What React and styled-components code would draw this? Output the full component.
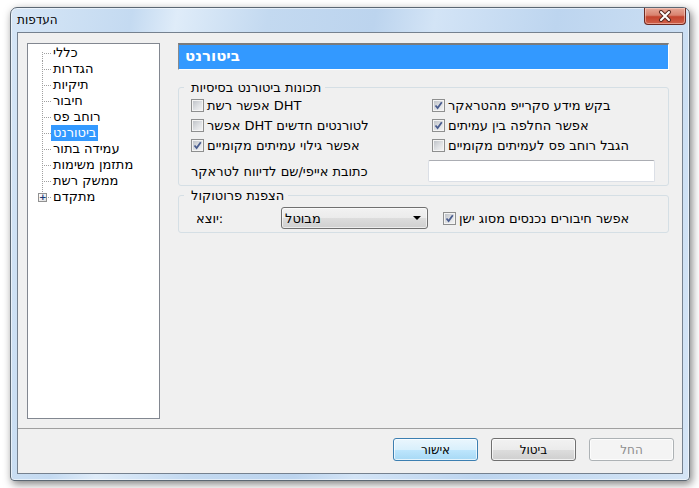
import React from 'react';
import styled, { createGlobalStyle } from 'styled-components';

const GlobalStyle = createGlobalStyle`
  html, body {
    margin: 0;
    padding: 0;
    background: #fff;
  }
  body {
    font-family: "DejaVu Sans", "Liberation Sans", sans-serif;
    font-size: 13px;
    color: #000;
  }
  #root {
    width: 699px;
    height: 488px;
    overflow: hidden;
  }
`;

const treeItems = [
  'כללי',
  'הגדרות',
  'תיקיות',
  'חיבור',
  'רוחב פס',
  'ביטורנט',
  'עמידה בתור',
  'מתזמן משימות',
  'ממשק רשת',
  'מתקדם',
];

const basicLeft = [
  { label: 'אפשר רשת DHT', checked: false },
  { label: 'אפשר DHT לטורנטים חדשים', checked: false },
  { label: 'אפשר גילוי עמיתים מקומיים', checked: true },
];

const basicRight = [
  { label: 'בקש מידע סקרייפ מהטראקר', checked: true },
  { label: 'אפשר החלפה בין עמיתים', checked: true },
  { label: 'הגבל רוחב פס לעמיתים מקומיים', checked: false },
];

const CheckMark = () => (
  <svg width="9" height="9" viewBox="0 0 9 9">
    <path d="M1.5 4.5 L3.6 7 L7.8 1.2" fill="none" stroke="#4a5d8f" strokeWidth="1.8" />
  </svg>
);

const CloseGlyph = () => (
  <svg width="14" height="12" viewBox="0 0 14 12">
    <path d="M3 2 L11 10 M11 2 L3 10" stroke="#5a2a22" strokeWidth="4" strokeLinecap="round" />
    <path d="M3 2 L11 10 M11 2 L3 10" stroke="#fff" strokeWidth="2" strokeLinecap="round" />
  </svg>
);

const CheckBox = ({ checked, label }) => (
  <CheckRow>
    <Box>{checked && <CheckMark />}</Box>
    <span>{label}</span>
  </CheckRow>
);

const App = () => {
  return (
    <>
      <GlobalStyle />
      <Window>
        <TitleBar>
          <Title>העדפות</Title>
          <CloseButton><CloseGlyph /></CloseButton>
        </TitleBar>
        <Client>
          <Main>
            <Tree>
              {treeItems.map((item, idx) => (
                <TreeRow key={item}>
                  <Connector $first={idx === 0} $last={idx === treeItems.length - 1}>
                    {idx === treeItems.length - 1 && <PlusBox>+</PlusBox>}
                  </Connector>
                  <TreeLabel $selected={item === 'ביטורנט'}>{item}</TreeLabel>
                </TreeRow>
              ))}
            </Tree>

            <Panel>
              <Banner>ביטורנט</Banner>

              <Group $top={11} $pad="1px 12px 3px">
                <Legend>תכונות ביטורנט בסיסיות</Legend>
                <BasicGrid>
                  <Column>
                    {basicLeft.map((c) => (
                      <CheckBox key={c.label} {...c} />
                    ))}
                  </Column>
                  <Column>
                    {basicRight.map((c) => (
                      <CheckBox key={c.label} {...c} />
                    ))}
                  </Column>
                  <TrackerLabel>כתובת אייפי/שם לדיווח לטראקר</TrackerLabel>
                  <TextInput />
                </BasicGrid>
              </Group>

              <Group $top={3} $pad="5px 12px 3px">
                <Legend>הצפנת פרוטוקול</Legend>
                <EncRow>
                  <EncLabel>יוצא:</EncLabel>
                  <Select>
                    <span>מבוטל</span>
                    <Arrow />
                  </Select>
                  <EncCheck>
                    <CheckBox checked label="אפשר חיבורים נכנסים מסוג ישן" />
                  </EncCheck>
                </EncRow>
              </Group>
            </Panel>
          </Main>

          <Separator />

          <Footer>
            <Button $variant="default">אישור</Button>
            <Button>ביטול</Button>
            <Button $variant="disabled">החל</Button>
          </Footer>
        </Client>
      </Window>
    </>
  );
};

export default App;

const Window = styled.div`
  margin: 7px 0 0 10px;
  width: 680px;
  height: 474px;
  box-sizing: border-box;
  border: 1px solid #5b6773;
  border-radius: 7px 7px 4px 4px;
  padding: 0 6px 6px;
  display: flex;
  flex-direction: column;
  background: linear-gradient(100deg, #d6e6f6 0%, #c4daf1 16%, #dfecf9 22%, #c3d9f0 34%, #bcd4ee 48%, #d3e4f6 56%, #bdd5ef 72%, #cadef3 88%, #d5e5f6 100%);
  box-shadow: 2px 3px 9px rgba(0, 0, 0, 0.5), inset 0 0 0 1px rgba(255, 255, 255, 0.55);
`;

const TitleBar = styled.div`
  height: 24px;
  display: flex;
  justify-content: space-between;
  align-items: flex-start;
`;

const Title = styled.div`
  font-size: 12px;
  line-height: 25px;
  color: #000;
`;

const CloseButton = styled.div`
  width: 42px;
  height: 17px;
  margin-right: -3px;
  box-sizing: border-box;
  border: 1px solid #6d2a22;
  border-top: none;
  border-radius: 0 0 4px 4px;
  background: linear-gradient(#e6a898 0%, #d9836f 45%, #c4442e 55%, #d0614a 100%);
  box-shadow: inset 0 0 0 1px rgba(255, 220, 210, 0.5);
  display: flex;
  align-items: center;
  justify-content: center;
`;

const Client = styled.div`
  flex: 1;
  background: #f0f0f0;
  border: 1px solid #75818f;
  display: flex;
  flex-direction: column;
`;

const Main = styled.div`
  display: flex;
  gap: 18px;
  padding: 10px 13px 0 9px;
`;

const Tree = styled.div`
  width: 133px;
  height: 376px;
  box-sizing: border-box;
  flex-shrink: 0;
  background: #fff;
  border: 1px solid #828790;
  padding-top: 1px;
`;

const TreeRow = styled.div`
  display: flex;
  align-items: center;
  height: 16px;
  white-space: nowrap;
`;

const Connector = styled.span`
  position: relative;
  width: 23px;
  height: 16px;
  flex-shrink: 0;
  &::before {
    content: '';
    position: absolute;
    left: 14px;
    width: 1px;
    top: ${(p) => (p.$first ? '7px' : '0')};
    bottom: ${(p) => (p.$last ? '8px' : '0')};
    background: repeating-linear-gradient(to bottom, #a0a0a0 0 1px, transparent 1px 2px);
  }
  &::after {
    content: '';
    position: absolute;
    left: 15px;
    top: 8px;
    width: 8px;
    height: 1px;
    background: repeating-linear-gradient(to right, transparent 0 1px, #a0a0a0 1px 2px);
  }
`;

const PlusBox = styled.span`
  position: absolute;
  left: 10px;
  top: 4px;
  width: 9px;
  height: 9px;
  box-sizing: border-box;
  z-index: 1;
  border: 1px solid #919191;
  background: linear-gradient(135deg, #fff, #e0e0e0);
  color: #1c3c78;
  font: bold 9px/7px "DejaVu Sans", sans-serif;
  text-align: center;
`;

const TreeLabel = styled.span`
  padding: 0 2px;
  line-height: 16px;
  background: ${(p) => (p.$selected ? '#3399ff' : 'transparent')};
  color: ${(p) => (p.$selected ? '#fff' : '#000')};
`;

const Panel = styled.div`
  flex: 1;
  min-width: 0;
`;

const Banner = styled.div`
  height: 27px;
  box-sizing: border-box;
  background: #3399ff;
  border-top: 2px solid #7b7b7b;
  border-left: 1px solid #8a8a8a;
  border-right: 1px solid #fff;
  border-bottom: 1px solid #fff;
  padding-left: 6px;
  color: #fff;
  font-weight: bold;
  font-size: 15px;
  line-height: 23px;
`;

const Group = styled.fieldset`
  margin: ${(p) => p.$top}px 0 0;
  padding: ${(p) => p.$pad};
  border: 1px solid #d5dfe5;
  border-radius: 3px;
  min-width: 0;
`;

const Legend = styled.legend`
  margin-left: -7px;
  padding: 0 4px 0 7px;
  line-height: 13px;
`;

const BasicGrid = styled.div`
  display: grid;
  grid-template-columns: 241px 1fr;
  align-items: center;
`;

const Column = styled.div`
  display: flex;
  flex-direction: column;
`;

const CheckRow = styled.label`
  display: flex;
  align-items: center;
  gap: 3px;
  height: 20px;
  white-space: nowrap;
`;

const Box = styled.span`
  width: 13px;
  height: 13px;
  box-sizing: border-box;
  flex-shrink: 0;
  border: 1px solid #8e8f8f;
  background: linear-gradient(135deg, #b9bdc3 0%, #dfe1e4 55%, #f6f6f6 100%);
  box-shadow: inset 0 0 0 1px #f4f4f4;
  display: flex;
  align-items: center;
  justify-content: center;
`;

const TrackerLabel = styled.div`
  margin-top: 5px;
`;

const TextInput = styled.div`
  margin: 5px 0 0 -4px;
  width: 227px;
  height: 22px;
  box-sizing: border-box;
  background: #fff;
  border: 1px solid #dbdfe6;
  border-top-color: #abadb3;
  border-radius: 2px;
`;

const EncRow = styled.div`
  display: flex;
  align-items: center;
  height: 22px;
`;

const EncLabel = styled.div`
  width: 90px;
  padding-left: 5px;
  box-sizing: border-box;
`;

const Select = styled.div`
  width: 147px;
  height: 22px;
  box-sizing: border-box;
  border: 1px solid #707070;
  border-radius: 3px;
  background: linear-gradient(#f2f2f2 0%, #ebebeb 50%, #dddddd 51%, #cfcfcf 100%);
  box-shadow: inset 0 0 0 1px rgba(255, 255, 255, 0.6);
  display: flex;
  align-items: center;
  justify-content: space-between;
  padding: 0 6px 0 3px;
`;

const Arrow = styled.span`
  width: 0;
  height: 0;
  border-left: 4px solid transparent;
  border-right: 4px solid transparent;
  border-top: 4px solid #000;
`;

const EncCheck = styled.div`
  margin-left: 15px;
`;

const Separator = styled.div`
  margin-top: 9px;
  border-top: 1px solid #a0a0a0;
`;

const Footer = styled.div`
  display: flex;
  justify-content: flex-end;
  gap: 13px;
  padding: 9px 8px 0;
`;

const Button = styled.button`
  width: 85px;
  height: 23px;
  padding: 0;
  border-radius: 3px;
  font: 12px "DejaVu Sans", "Liberation Sans", sans-serif;
  color: ${(p) => (p.$variant === 'disabled' ? '#8d8d8d' : '#000')};
  border: 1px solid
    ${(p) => (p.$variant === 'default' ? '#3c7fb1' : p.$variant === 'disabled' ? '#adb2b5' : '#707070')};
  background: ${(p) =>
    p.$variant === 'default'
      ? 'linear-gradient(#eaf6fd 0%, #d9f0fc 50%, #bee6fd 51%, #a7d9f5 100%)'
      : p.$variant === 'disabled'
      ? '#f4f4f4'
      : 'linear-gradient(#f2f2f2 0%, #ebebeb 50%, #dddddd 51%, #cfcfcf 100%)'};
  box-shadow: inset 0 0 0 1px rgba(255, 255, 255, 0.7);
`;
